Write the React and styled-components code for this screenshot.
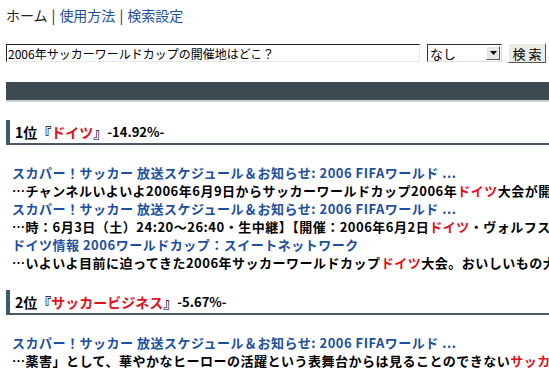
import styled, { createGlobalStyle } from "styled-components";

const GlobalStyle = createGlobalStyle`
  html, body {
    margin: 0;
    padding: 0;
    background: #fff;
    overflow: hidden;
  }
  body {
    font-family: "Noto Sans CJK JP", "Noto Sans", sans-serif;
    color: #000;
  }
`;

const results = [
  {
    rank: 1,
    word: "ドイツ",
    score: "-14.92%-",
    items: [
      {
        title: "スカパー！サッカー 放送スケジュール＆お知らせ: 2006 FIFAワールド ...",
        snippet: ["…チャンネルいよいよ2006年6月9日からサッカーワールドカップ2006年", "ドイツ", "大会が開催されます。"],
      },
      {
        title: "スカパー！サッカー 放送スケジュール＆お知らせ: 2006 FIFAワールド ...",
        snippet: ["…時：6月3日（土）24:20～26:40・生中継】【開催：2006年6月2日", "ドイツ", "・ヴォルフスブルク"],
      },
      {
        title: "ドイツ情報 2006ワールドカップ：スイートネットワーク",
        snippet: ["…いよいよ目前に迫ってきた2006年サッカーワールドカップ", "ドイツ", "大会。おいしいもの大好き"],
      },
    ],
  },
  {
    rank: 2,
    word: "サッカービジネス",
    score: "-5.67%-",
    items: [
      {
        title: "スカパー！サッカー 放送スケジュール＆お知らせ: 2006 FIFAワールド ...",
        snippet: ["…薬害」として、華やかなヒーローの活躍という表舞台からは見ることのできない", "サッカービジネス", ""],
      },
    ],
  },
];

const App = () => {
  return (
    <>
      <GlobalStyle />
      <Page>
        <Nav>
          <span>ホーム</span>
          <Sep>|</Sep>
          <NavLink href="#">使用方法</NavLink>
          <Sep>|</Sep>
          <NavLink href="#">検索設定</NavLink>
        </Nav>
        <SearchRow>
          <QueryInput defaultValue="2006年サッカーワールドカップの開催地はどこ？" />
          <SelectBox>
            <span>なし</span>
            <Arrow>
              <svg width="7" height="4" viewBox="0 0 7 4">
                <path d="M0 0h7L3.5 4z" fill="#000" />
              </svg>
            </Arrow>
          </SelectBox>
          <SearchButton>検 索</SearchButton>
        </SearchRow>
        <DarkBar />
        {results.map((group) => (
          <Group key={group.rank}>
            <RankHeading>
              {group.rank}位『<Hit>{group.word}</Hit>』<Score>{group.score}</Score>
            </RankHeading>
            <ResultList>
              {group.items.map((item, id) => (
                <Result key={id}>
                  <ResultTitle href="#">{item.title}</ResultTitle>
                  <Snippet>
                    {item.snippet[0]}
                    <Hit>{item.snippet[1]}</Hit>
                    {item.snippet[2]}
                  </Snippet>
                </Result>
              ))}
            </ResultList>
          </Group>
        ))}
      </Page>
    </>
  );
};

const Page = styled.div`
  width: 549px;
  height: 368px;
  overflow: hidden;
  padding: 0 0 0 6px;
  box-sizing: border-box;
`;

const Nav = styled.div`
  display: flex;
  align-items: center;
  gap: 4px;
  height: 18px;
  margin-top: 6px;
  font-size: 14px;
  color: #222;
`;

const Sep = styled.span`
  color: #222;
`;

const NavLink = styled.a`
  color: #1d4f9c;
  text-decoration: none;
`;

const SearchRow = styled.div`
  display: flex;
  align-items: center;
  margin-top: 19px;
  height: 20px;
`;

const QueryInput = styled.input`
  width: 414px;
  height: 18px;
  box-sizing: border-box;
  border: 1px solid #e8e8e8;
  border-top-color: #222;
  border-left-color: #222;
  padding: 0 1px;
  font-family: "Noto Sans CJK JP", sans-serif;
  font-size: 12px;
  color: #000;
  outline: none;
`;

const SelectBox = styled.div`
  display: flex;
  align-items: center;
  justify-content: space-between;
  margin-left: 7px;
  width: 75px;
  height: 18px;
  box-sizing: border-box;
  border: 1px solid #ddd;
  border-top-color: #333;
  border-left-color: #333;
  padding-left: 2px;
  font-size: 13px;
`;

const Arrow = styled.span`
  display: flex;
  align-items: center;
  justify-content: center;
  width: 14px;
  height: 14px;
  margin-right: 1px;
  background: #e6e6e6;
  border: 1px solid #fff;
  border-right-color: #555;
  border-bottom-color: #555;
  box-sizing: border-box;
`;

const SearchButton = styled.button`
  margin-left: 6px;
  width: 38px;
  height: 20px;
  padding: 0;
  font-family: "Noto Sans CJK JP", sans-serif;
  font-size: 13px;
  background: #ecebe6;
  border: 1px solid #fff;
  border-right-color: #555;
  border-bottom-color: #555;
  color: #000;
`;

const DarkBar = styled.div`
  margin-top: 19px;
  height: 18px;
  background: #3d4a50;
  border-bottom: 2px solid #c9d3d8;
`;

const Group = styled.section`
  margin-top: 18px;
`;

const RankHeading = styled.h2`
  margin: 0;
  height: 23px;
  display: flex;
  align-items: center;
  padding-left: 5px;
  border-left: 4px solid #3a5a6f;
  border-bottom: 2px solid #4b5c68;
  font-size: 14px;
  font-weight: bold;
  white-space: nowrap;
`;

const Hit = styled.span`
  color: #e0101c;
`;

const Score = styled.span`
  font-size: 13px;
`;

const ResultList = styled.div`
  margin-top: 19px;
  padding-left: 6px;
  display: flex;
  flex-direction: column;
`;

const Result = styled.div`
  display: flex;
  flex-direction: column;
  white-space: nowrap;
  font-size: 13px;
  font-weight: bold;
  line-height: 18px;
  letter-spacing: 0.5px;
`;

const ResultTitle = styled.a`
  color: #1c4f9f;
  text-decoration: none;
`;

const Snippet = styled.div`
  color: #000;
`;

export default App;
